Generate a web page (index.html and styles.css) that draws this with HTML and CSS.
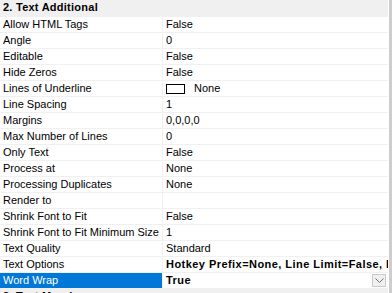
FILE: index.html
```html
<!DOCTYPE html>
<html lang="en">
<head>
    <meta charset="UTF-8">
    <title>Properties</title>
    <link rel="stylesheet" href="styles.css">
</head>
<body>
    <div class="grid">
        <div class="category">2. Text Additional</div>
        <div class="row"><div class="name">Allow HTML Tags</div><div class="value">False</div></div>
        <div class="row"><div class="name">Angle</div><div class="value">0</div></div>
        <div class="row"><div class="name">Editable</div><div class="value">False</div></div>
        <div class="row"><div class="name">Hide Zeros</div><div class="value">False</div></div>
        <div class="row"><div class="name">Lines of Underline</div><div class="value"><span class="swatch"></span>None</div></div>
        <div class="row"><div class="name">Line Spacing</div><div class="value">1</div></div>
        <div class="row"><div class="name">Margins</div><div class="value">0,0,0,0</div></div>
        <div class="row"><div class="name">Max Number of Lines</div><div class="value">0</div></div>
        <div class="row"><div class="name">Only Text</div><div class="value">False</div></div>
        <div class="row"><div class="name">Process at</div><div class="value">None</div></div>
        <div class="row"><div class="name">Processing Duplicates</div><div class="value">None</div></div>
        <div class="row"><div class="name">Render to</div><div class="value"></div></div>
        <div class="row"><div class="name">Shrink Font to Fit</div><div class="value">False</div></div>
        <div class="row"><div class="name">Shrink Font to Fit Minimum Size</div><div class="value">1</div></div>
        <div class="row"><div class="name">Text Quality</div><div class="value">Standard</div></div>
        <div class="row"><div class="name">Text Options</div><div class="value changed">Hotkey Prefix=None, Line Limit=False, Line Alignment=Near, Trimming=None</div></div>
        <div class="row selected">
            <div class="name">Word Wrap</div>
            <div class="value changed">True
                <span class="drop">
                    <svg width="9" height="5" viewBox="0 0 9 5"><path d="M0.5 0.5 L4.5 4.5 L8.5 0.5" fill="none" stroke="#707070" stroke-width="1"/></svg>
                </span>
            </div>
        </div>
        <div class="category">3. Text Margins</div>
    </div>
    <div class="scrollbar"></div>
</body>
</html>
```

FILE: styles.css
```css
body {
    margin: 0;
    font-family: 'Liberation Sans', Arial, sans-serif;
    font-size: 11px;
    color: #000;
    background: #fff;
    display: flex;
    height: 293px;
    overflow: hidden;
}
.grid {
    width: 388px;
    display: flex;
    flex-direction: column;
    overflow: hidden;
}
.scrollbar {
    width: 3px;
    margin-left: 1px;
    background: #cdcdcd;
}
.category {
    flex: none;
    height: 17px;
    line-height: 15px;
    background: #f0f0f0;
    font-weight: bold;
    letter-spacing: 0.25px;
    padding-left: 3px;
    white-space: nowrap;
}
.row {
    flex: none;
    display: flex;
    height: 15px;
    line-height: 15px;
    border-bottom: 1px solid #f0f0f0;
}
.name {
    width: 159px;
    padding-left: 3px;
    border-right: 1px solid #f0f0f0;
    white-space: nowrap;
    overflow: hidden;
}
.value {
    flex: 1;
    padding-left: 3px;
    white-space: nowrap;
    overflow: hidden;
    position: relative;
    display: flex;
    align-items: center;
}
.changed {
    font-weight: bold;
    letter-spacing: 0.45px;
}
.swatch {
    width: 19px;
    height: 10px;
    border: 1px solid #000;
    box-sizing: border-box;
    margin-right: 9px;
}
.selected .name {
    background: #0078d7;
    color: #fff;
}
.drop {
    position: absolute;
    right: 2px;
    top: 1px;
    width: 14px;
    height: 13px;
    box-sizing: border-box;
    border: 1px solid #c9c9c9;
    background: #f0f0f0;
    display: flex;
    align-items: center;
    justify-content: center;
}
```
